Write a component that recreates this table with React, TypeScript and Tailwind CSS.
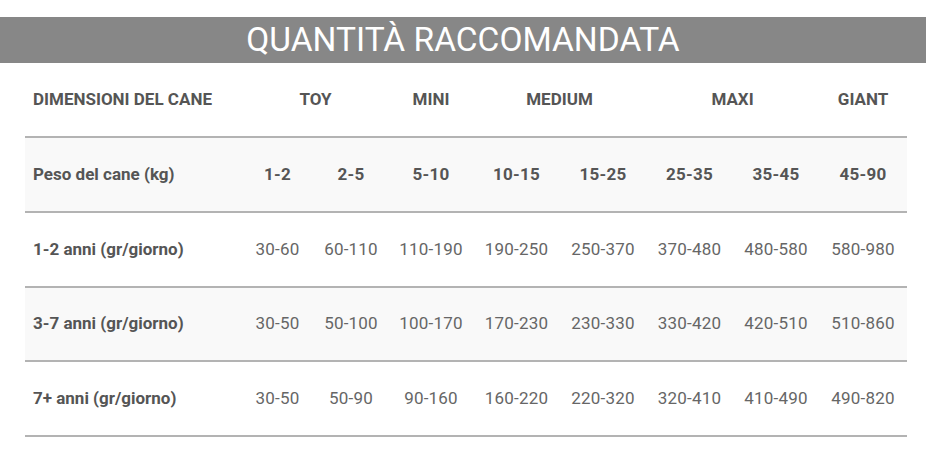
import React from "react";

const weights = ["1-2", "2-5", "5-10", "10-15", "15-25", "25-35", "35-45", "45-90"];
const rows: { label: string; values: string[]; h: string }[] = [
  { label: "1-2 anni (gr/giorno)", h: "h-[75px]", values: ["30-60", "60-110", "110-190", "190-250", "250-370", "370-480", "480-580", "580-980"] },
  { label: "3-7 anni (gr/giorno)", h: "h-[74px]", values: ["30-50", "50-100", "100-170", "170-230", "230-330", "330-420", "420-510", "510-860"] },
  { label: "7+ anni (gr/giorno)", h: "h-[75px]", values: ["30-50", "50-90", "90-160", "160-220", "220-320", "320-410", "410-490", "490-820"] },
];

export default function App() {
  return (
    <div className="w-[926px] h-[450px] bg-white pt-[17px] overflow-hidden" style={{ fontFamily: "Roboto, 'Liberation Sans', sans-serif" }}>
      <div className="h-[46px] bg-[#878787] flex items-center justify-center">
        <h1 className="text-white text-[33.5px] leading-none font-normal">QUANTITÀ RACCOMANDATA</h1>
      </div>
      <div className="px-[25px]">
        <table className="w-[882px] table-fixed border-collapse">
          <colgroup>
            <col className="w-[217px]" />
            <col className="w-[71px]" />
            <col className="w-[76px]" />
            <col className="w-[84px]" />
            <col className="w-[87px]" />
            <col className="w-[86px]" />
            <col className="w-[87px]" />
            <col className="w-[86px]" />
            <col className="w-[88px]" />
          </colgroup>
          <tbody>
            <tr className="h-[74px] border-b-2 border-[#b3b3b3] bg-white text-[#555] font-bold text-[17px]">
              <td className="pl-[8px] text-left">DIMENSIONI DEL CANE</td>
              <td colSpan={2} className="text-center">TOY</td>
              <td className="text-center">MINI</td>
              <td colSpan={2} className="text-center">MEDIUM</td>
              <td colSpan={2} className="text-center">MAXI</td>
              <td className="text-center">GIANT</td>
            </tr>
            <tr className="h-[75px] border-b-2 border-[#b3b3b3] bg-[#f9f9f9] text-[#555] font-bold text-[17px]">
              <td className="pl-[8px] text-left">Peso del cane (kg)</td>
              {weights.map((w) => (
                <td key={w} className="text-center tracking-[0.3px]">{w}</td>
              ))}
            </tr>
            {rows.map((r, i) => (
              <tr key={r.label} className={`${r.h} border-b-2 border-[#b3b3b3] ${i === 1 ? "bg-[#f9f9f9]" : "bg-white"}`}>
                <td className="pl-[8px] text-left text-[#555] font-bold text-[17px]">{r.label}</td>
                {r.values.map((v, j) => (
                  <td key={j} className="text-center text-[#666] text-[17px] tracking-[0.2px]">{v}</td>
                ))}
              </tr>
            ))}
          </tbody>
        </table>
      </div>
    </div>
  );
}
